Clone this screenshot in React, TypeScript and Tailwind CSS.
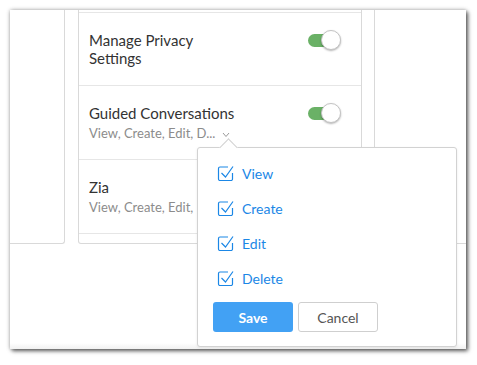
import React from "react";

function Toggle() {
  return (
    <div className="relative w-[33px] h-[20px] flex items-center shrink-0">
      <div className="w-[26px] h-[13px] rounded-full bg-[#6ab166]" />
      <div className="absolute right-0 top-0 w-[20px] h-[20px] rounded-full bg-white border border-[#c4c4c4] shadow-[0_1px_2px_rgba(0,0,0,0.3)]" />
    </div>
  );
}

function CheckIcon() {
  return (
    <svg width="17" height="17" viewBox="0 0 17 17" fill="none" className="shrink-0">
      <path
        d="M11 2 H3 a1.5 1.5 0 0 0 -1.5 1.5 V14 a1.5 1.5 0 0 0 1.5 1.5 H14 a1.5 1.5 0 0 0 1.5 -1.5 V8"
        stroke="#1b87e6"
        strokeWidth="1.2"
      />
      <path d="M4.5 8 L8.5 12 L16 1.5" stroke="#1b87e6" strokeWidth="1.2" />
    </svg>
  );
}

function Row({
  title,
  sub,
  toggle,
  chevron,
  first,
}: {
  title: React.ReactNode;
  sub?: string;
  toggle?: boolean;
  chevron?: boolean;
  first?: boolean;
}) {
  return (
    <div
      className={`${first ? "h-[73px] pt-[18px]" : "h-[74px] pt-[18px]"} border-t border-[#e6e6e6] pl-[10px] pr-[20px] flex justify-between items-start`}
    >
      <div className="flex flex-col">
        <div className="text-[15px] leading-[18px] text-[#333]">{title}</div>
        {sub && (
          <div className="mt-[2px] text-[13px] leading-[18px] text-[#8c8c8c] flex items-center whitespace-nowrap">
            {sub}
            {chevron && (
              <svg width="8" height="6" viewBox="0 0 8 6" className="ml-[7px] mt-[4px]" fill="none">
                <path d="M1 1 L4 4.5 L7 1" stroke="#9a9a9a" strokeWidth="1" />
              </svg>
            )}
          </div>
        )}
      </div>
      {toggle && (
        <div className="-mt-[1px]">
          <Toggle />
        </div>
      )}
    </div>
  );
}

export default function App() {
  const items = ["View", "Create", "Edit", "Delete"];
  return (
    <div className="w-[477px] h-[365px] bg-white pt-[10px] pl-[10px] font-['Lato',sans-serif]">
      <div className="relative w-[456px] h-[339px] bg-white flex flex-col shadow-[2px_2px_4px_rgba(0,0,0,0.6),0_0_4px_rgba(0,0,0,0.3)]">
        <div className="flex h-[234px] shrink-0">
          <div className="w-[55px] h-full border-r border-b border-[#d9d9d9] rounded-br-[3px]" />
          <div className="ml-[13px] w-[284px] h-full border-l border-r border-b border-[#d9d9d9] rounded-b-[3px] pt-[2px] flex flex-col">
            <Row
              first
              title={
                <>
                  Manage Privacy
                  <br />
                  Settings
                </>
              }
              toggle
            />
            <Row title="Guided Conversations" sub="View, Create, Edit, D..." toggle chevron />
            <Row title="Zia" sub="View, Create, Edit, Delete" />
            <div className="border-t border-[#e6e6e6] flex-1" />
          </div>
          <div className="ml-[12px] flex-1 h-full border-l border-b border-[#d9d9d9] rounded-bl-[3px]" />
        </div>
        <div className="flex-1" />
        <div className="h-[6px] bg-gradient-to-b from-white to-[#f1f1f1]" />

        {/* Popup */}
        <div className="absolute left-[187px] top-[137px] w-[260px] h-[200px] bg-white border border-[#d2d2d2] rounded-[3px] shadow-[0_1px_3px_rgba(0,0,0,0.08)] flex flex-col pt-[8px] px-[15px]">
          <div className="absolute left-[24px] -top-[7px] w-[13px] h-[13px] rotate-45 bg-white border-l border-t border-[#d2d2d2]" />
          {items.map((it) => (
            <div key={it} className="h-[35px] flex items-center pl-[4px] gap-[8px]">
              <CheckIcon />
              <span className="text-[14px] text-[#1b87e6] leading-none">{it}</span>
            </div>
          ))}
          <div className="mt-[6px] flex gap-[5px]">
            <button className="w-[80px] h-[30px] rounded-[3px] bg-[#42a1f4] text-white text-[14px] font-bold">
              Save
            </button>
            <button className="w-[80px] h-[30px] rounded-[3px] bg-white border border-[#cfcfcf] text-[#555] text-[14px]">
              Cancel
            </button>
          </div>
        </div>
      </div>
    </div>
  );
}
